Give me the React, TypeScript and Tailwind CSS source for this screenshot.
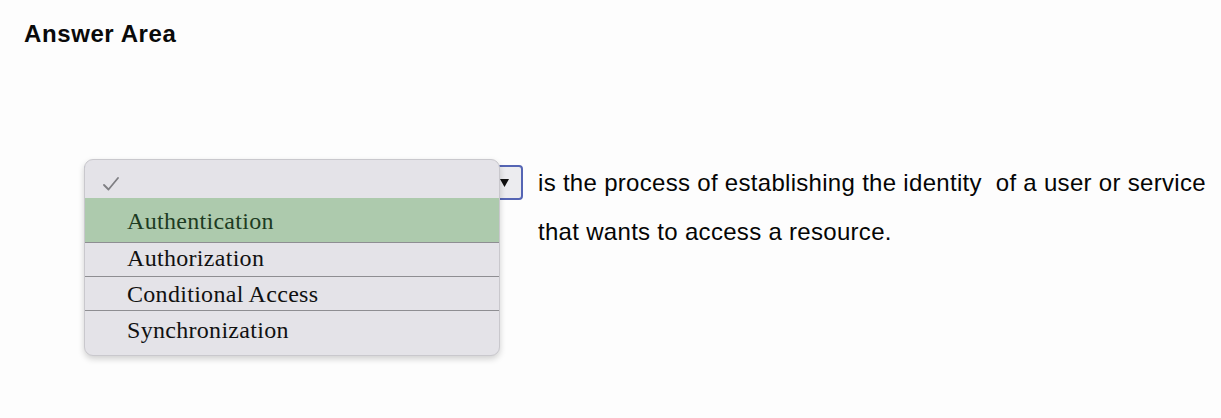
import React from "react";

export default function App() {
  const serif = { fontFamily: '"Liberation Serif", "Times New Roman", serif' };
  return (
    <div
      className="w-[1221px] h-[418px] bg-[#fdfdfd] text-[#111] overflow-hidden"
      style={{ fontFamily: '"Liberation Sans", Arial, sans-serif' }}
    >
      <div className="pl-[24px] pt-[19px]">
        <h1 className="text-[24px] leading-[30px] font-bold tracking-[0.6px] text-[#0a0a0a]">Answer Area</h1>
      </div>
      <div className="flex mt-[116px] pl-[84px]">
        <div className="relative w-[439px] h-[35px] shrink-0">
          <div className="w-full h-full rounded-[4px] border-2 border-[#5565b4] bg-[#ececef] flex items-center justify-end pr-[12px]">
            <svg width="9" height="8" viewBox="0 0 9 8">
              <path d="M0 0 L9 0 L4.5 8 Z" fill="#111" />
            </svg>
          </div>
          <div className="absolute left-0 top-[-6px] w-[416px] rounded-[9px] bg-[#e4e3e8] border border-[#c9c8cd] shadow-[0_3px_6px_rgba(0,0,0,0.18)] overflow-hidden pb-[10px]" style={serif}>
            <div className="h-[38px] flex items-center pl-[18px] pt-[9px]">
              <svg width="16" height="14" viewBox="0 0 16 14">
                <path d="M1 8 L5.5 12.5 L15 1" fill="none" stroke="#7f7f83" strokeWidth="1.8" strokeLinecap="round" strokeLinejoin="round" />
              </svg>
            </div>
            <div className="h-[45px] bg-[#adcaad] pl-[42px] pt-[8px] text-[24px] tracking-[0.3px] leading-[30px] text-[#1d3b22] border-b border-[#8e8e92]">
              Authentication
            </div>
            <div className="h-[34px] pl-[42px] text-[24px] tracking-[0.3px] leading-[30px] text-[#111] border-b border-[#8e8e92]">
              Authorization
            </div>
            <div className="h-[34px] pl-[42px] pt-[2px] text-[24px] tracking-[0.3px] leading-[30px] text-[#111] border-b border-[#8e8e92]">
              Conditional Access
            </div>
            <div className="h-[34px] pl-[42px] pt-[4px] text-[24px] tracking-[0.3px] leading-[30px] text-[#111]">
              Synchronization
            </div>
          </div>
        </div>
        <div className="pl-[15px] text-[24px] tracking-[0.3px] leading-[49px] mt-[-7px] text-[#050505]">
          <div className="whitespace-nowrap">is the process of establishing the identity&nbsp; of a user or service</div>
          <div>that wants to access a resource.</div>
        </div>
      </div>
    </div>
  );
}
